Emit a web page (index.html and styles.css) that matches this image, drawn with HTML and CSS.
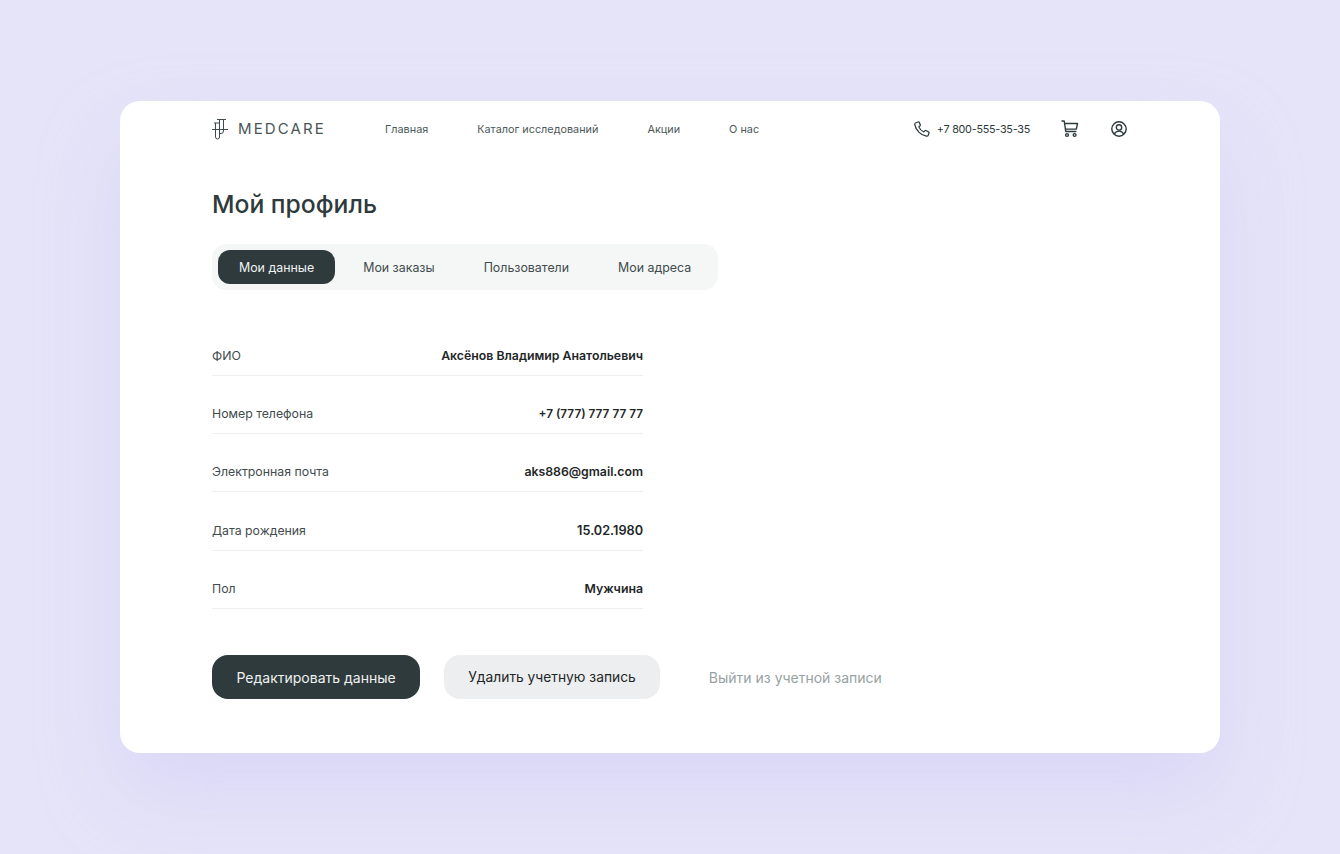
FILE: index.html
```html
<!DOCTYPE html>
<html lang="ru">
<head>
<meta charset="utf-8">
<title>Мой профиль — Medcare</title>
<link rel="stylesheet" href="styles.css">
</head>
<body>
<main class="card">
  <header class="header">
    <a class="logo">
      <svg class="logo-icon" viewBox="0 0 16 22" width="16" height="22" fill="none" stroke="#3f4b4c" stroke-width="1">
        <path d="M0 11.5H16"/>
        <path d="M5 1.5H14M7.5 1.5V11.5M11.5 1.5V11.5"/>
        <path d="M2 5H8"/>
        <path d="M3.5 5V19a2 2 0 0 0 2 2h0a2 2 0 0 0 2-2V11.5"/>
        <path d="M7.5 15.5h1.5a2.5 2.5 0 0 0 2.5-2.5V11.5"/>
      </svg>
      <span class="logo-text">MEDCARE</span>
    </a>
    <nav class="nav">
      <a>Главная</a>
      <a>Каталог исследований</a>
      <a>Акции</a>
      <a>О нас</a>
    </nav>
    <div class="contacts">
      <svg class="icon" viewBox="0 0 24 24" width="16" height="16" fill="none" stroke="#2e3a3b" stroke-width="1.9" stroke-linecap="round" stroke-linejoin="round">
        <path d="M6.2 1.5 2.8 2.6C1.6 3 1 4.2 1.2 5.5 2.6 13.8 10.2 21.4 18.5 22.8c1.3.2 2.5-.4 2.9-1.6l1.1-3.1c.2-.6 0-1.2-.5-1.5l-4-2.4c-.5-.3-1.1-.2-1.5.2l-1.8 1.9c-3.2-1.3-6.2-4.3-7.5-7.5l1.9-1.8c.4-.4.5-1 .2-1.5L7.9 2c-.3-.5-1.1-.7-1.7-.5Z"/>
      </svg>
      <span class="phone">+7 800-555-35-35</span>
      <svg class="icon cart" viewBox="0 0 18 18" width="18" height="18" fill="none" stroke="#2e3a3b" stroke-width="1.4" stroke-linecap="round" stroke-linejoin="round">
        <path d="M1 1h2.2l1.6 10.5h10"/>
        <path d="M3.6 3.5H16.5l-1.2 5.6H4.4"/>
        <circle cx="6" cy="15" r="1.4"/>
        <circle cx="13.6" cy="15" r="1.4"/>
      </svg>
      <svg class="icon user" viewBox="0 0 16 16" width="16" height="16" fill="none" stroke="#2e3a3b" stroke-width="1.4">
        <circle cx="8" cy="8" r="7.2"/>
        <circle cx="8" cy="6.4" r="2.7"/>
        <path d="M3.2 13.2c.9-2 2.7-3.1 4.8-3.1s3.9 1.1 4.8 3.1"/>
      </svg>
    </div>
  </header>

  <h1 class="title">Мой профиль</h1>

  <div class="tabs">
    <a class="tab tab-active">Мои данные</a>
    <a class="tab">Мои заказы</a>
    <a class="tab">Пользователи</a>
    <a class="tab">Мои адреса</a>
  </div>

  <dl class="fields">
    <div class="field"><dt>ФИО</dt><dd>Аксёнов Владимир Анатольевич</dd></div>
    <div class="field"><dt>Номер телефона</dt><dd class="num">+7 (777) 777 77 77</dd></div>
    <div class="field"><dt>Электронная почта</dt><dd>aks886@gmail.com</dd></div>
    <div class="field field-tall"><dt>Дата рождения</dt><dd class="date">15.02.1980</dd></div>
    <div class="field"><dt>Пол</dt><dd>Мужчина</dd></div>
  </dl>

  <div class="actions">
    <button class="btn btn-dark">Редактировать данные</button>
    <button class="btn btn-light">Удалить учетную запись</button>
    <button class="btn btn-ghost">Выйти из учетной записи</button>
  </div>
</main>
</body>
</html>
```
FILE: styles.css
```css
* { box-sizing: border-box; }
html, body { height: 100%; }
body {
  margin: 0;
  padding-top: 101px;
  background: #e6e4f8;
  font-family: Inter, "Noto Sans", sans-serif;
  color: #2e3a3b;
  overflow: hidden;
}
.card {
  width: 1100px;
  height: 652px;
  margin: 0 auto;
  padding: 0 92px;
  background: #fff;
  border-radius: 20px;
  box-shadow: 0 40px 80px rgba(200, 195, 245, 0.4);
}
.header {
  display: flex;
  align-items: center;
  height: 56px;
}
.logo { display: flex; align-items: center; gap: 10px; width: 173px; }
.logo-icon { display: block; }
.logo-text { font-size: 15px; letter-spacing: 2.1px; line-height: 16px; color: #4a5556; }
.nav { display: flex; gap: 49px; font-size: 10.85px; color: #4d5859; }
.contacts { display: flex; align-items: center; margin-left: auto; margin-right: 1px; }
.icon { display: block; }
.phone { margin-left: 7px; font-size: 10.8px; letter-spacing: -0.25px; color: #2e3a3b; }
.cart { margin-left: 31px; }
.user { margin-left: 32px; }
.title {
  margin: 29px 0 0;
  font-size: 24.7px;
  line-height: 36px;
  font-weight: 500;
  color: #2e3a3b;
}
.tabs {
  display: inline-flex;
  gap: 7px;
  margin-top: 22px;
  padding: 6px;
  background: #f5f7f7;
  border-radius: 14px;
  vertical-align: top;
}
.tab {
  display: flex;
  align-items: center;
  height: 34px;
  padding: 0 21px;
  border-radius: 12px;
  font-size: 12.4px;
  color: #3f4b4c;
}
.tab-active { background: #2e3a3b; color: #f1f4f4; }
.fields { width: 431px; margin: 28px 0 0; }
.field {
  display: flex;
  justify-content: space-between;
  align-items: center;
  height: 58px;
  padding-top: 18px;
  border-bottom: 1px solid #eef0f0;
  font-size: 12.3px;
}
.field-tall { height: 59px; }
.field dt { color: #3f4b4c; }
.field dd { margin: 0; font-weight: 600; color: #1f2728; }
.field .num { font-size: 11.8px; }
.field .date { font-size: 12.7px; }
.actions { display: flex; align-items: center; gap: 24px; margin-top: 46px; }
.btn {
  height: 44px;
  padding: 0 24px;
  border: 0;
  border-radius: 16px;
  font: inherit;
  font-size: 14px;
}
.btn-dark { padding: 0 24.5px; background: #2e3a3b; color: #eef1f1; }
.btn-light { font-size: 13.8px; background: #edeeef; color: #1f2728; }
.btn-ghost { padding: 0 25px; background: none; color: #98a2a3; }
```
